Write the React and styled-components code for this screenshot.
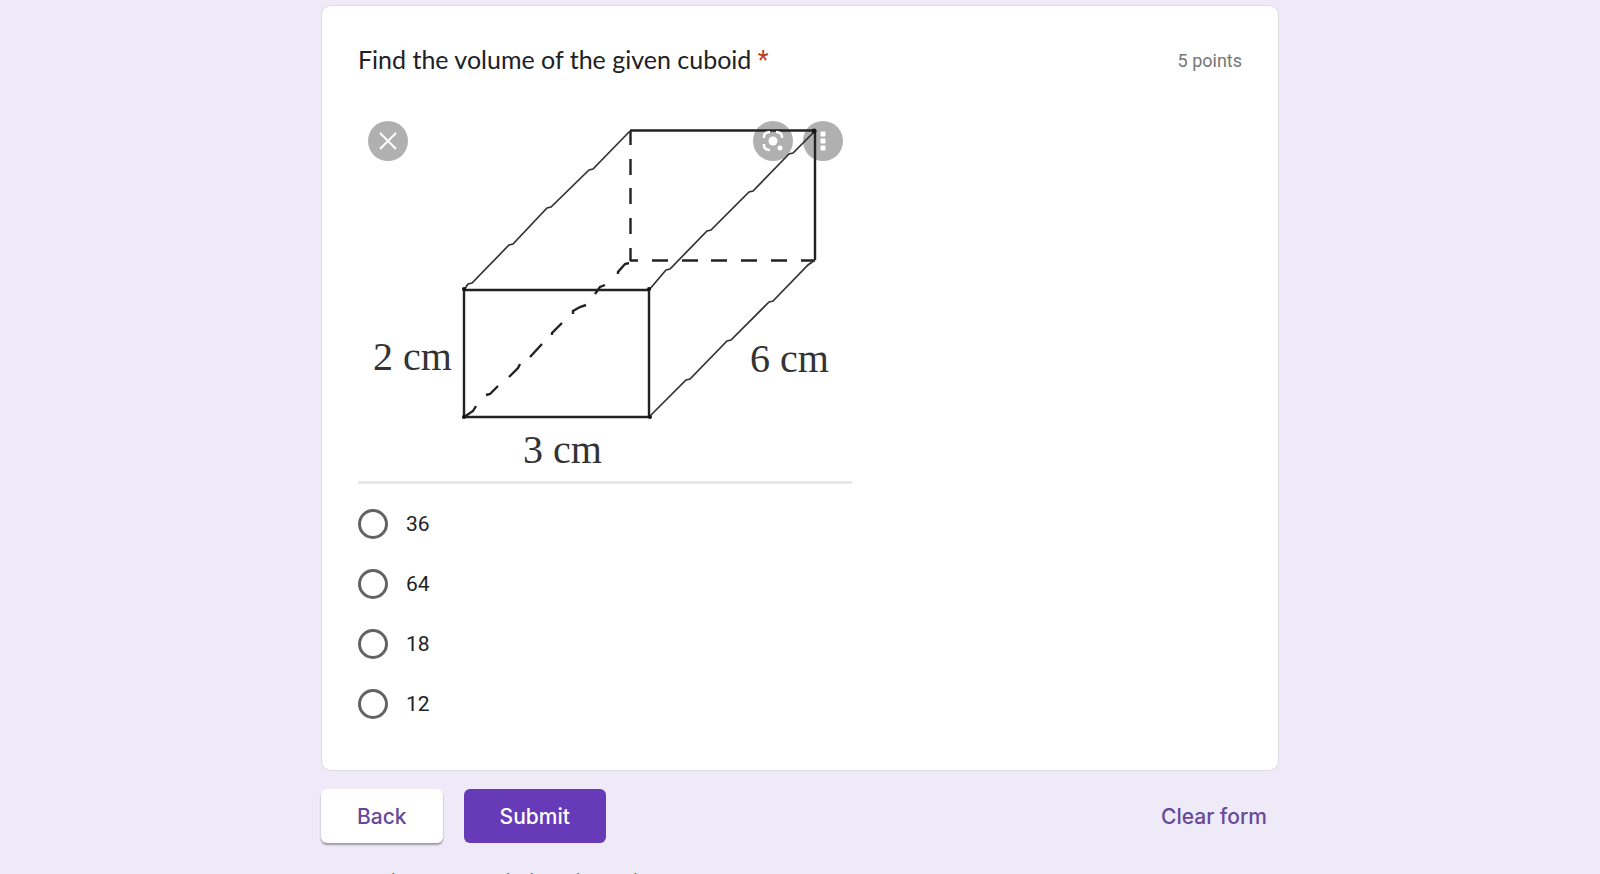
import React, { useState } from "react";
import styled, { createGlobalStyle } from "styled-components";

const GlobalStyle = createGlobalStyle`
  * {
    box-sizing: border-box;
  }

  html {
    scrollbar-width: none;
  }

  body {
    margin: 0;
    background: #eeeaf7;
    color: #202124;
    font-family: Roboto, "Liberation Sans", sans-serif;
  }
`;

const Page = styled.form`
  max-width: 958px;
  margin: 0 auto;
  padding: 5px 0 24px;
`;

const Card = styled.section`
  padding: 36px;
  background: #fff;
  border: 1px solid #dadce0;
  border-radius: 10px;
`;

const CardHeader = styled.header`
  display: flex;
  align-items: flex-start;
  justify-content: space-between;
  margin-bottom: 30px;
`;

const Question = styled.h1`
  margin: 0;
  font-family: Lato, sans-serif;
  font-size: 25px;
  font-weight: 400;
  line-height: 34px;
`;

const Required = styled.span`
  color: #c0391b;
  font-family: Roboto, sans-serif;
`;

const Points = styled.span`
  color: #777;
  font-size: 18px;
  line-height: 38px;
`;

const Figure = styled.figure`
  position: relative;
  max-width: 494px;
  margin: 0 0 10px;
  border-bottom: 3px solid #e8e8e8;
`;

const Drawing = styled.svg`
  display: block;
  width: 100%;
  font-family: "Liberation Serif", serif;
  font-size: 40px;
`;

const Overlay = styled.div`
  position: absolute;
  top: 11px;
  left: 10px;
  right: 9px;
  display: flex;
  justify-content: space-between;
`;

const OverlayGroup = styled.div`
  display: flex;
  gap: 10px;
`;

const RoundButton = styled.button`
  width: 40px;
  height: 40px;
  padding: 0;
  border: 0;
  border-radius: 50%;
  background: rgba(40, 40, 40, 0.37);
  color: #fff;

  svg {
    display: block;
  }
`;

const Options = styled.div`
  display: flex;
  flex-direction: column;
`;

const Option = styled.label`
  display: flex;
  align-items: center;
  gap: 18px;
  height: 60px;
  font-size: 21px;
  line-height: 24px;
`;

const Radio = styled.input`
  appearance: none;
  width: 30px;
  height: 30px;
  margin: 0;
  border: 3px solid #636363;
  border-radius: 50%;

  &:checked {
    border-color: #673ab7;
    background: radial-gradient(#673ab7 50%, transparent 52%);
  }
`;

const Actions = styled.div`
  display: flex;
  align-items: center;
  gap: 21px;
  margin-top: 18px;
`;

const Button = styled.button`
  height: 54px;
  padding: 0 36px;
  border: 0;
  border-radius: 6px;
  background: ${(props) => (props.$primary ? "#673ab7" : "#fff")};
  box-shadow: ${(props) =>
    props.$primary ? "none" : "0 2px 2px rgba(0, 0, 0, 0.35)"};
  color: ${(props) => (props.$primary ? "#fff" : "#66489c")};
  font: 500 21px Inter, sans-serif;
`;

const ClearButton = styled(Button)`
  margin-left: auto;
  padding: 0 12px;
  background: none;
  box-shadow: none;
`;

const Notice = styled.p`
  margin: 26px 0 0;
  color: #666;
  font-size: 18px;
  line-height: 24px;
`;

const options = ["36", "64", "18", "12"];

const Cuboid = () => (
  <Drawing viewBox="0 0 494 371" role="img" aria-label="Cuboid">
    <g fill="none" stroke="#222" strokeWidth="2.4">
      <path d="M106 180H291V307H106Z" />
      <path d="M272 20.5H457V150" />
      {/* hidden edges */}
      <path d="M272.5 21V35M272.5 49V65M272.5 78V94M272.5 108V124M272.5 138V151" />
      <path d="M272 150.5H280M294 150.5H310M324 150.5H340M353 150.5H369M383 150.5H399M413 150.5H429M443 150.5H457" />
      <path d="M106 307L115 301L118 296M128 285L132 284L140 276M151 267L160 258L162 254M172 247L184 234M194 225V223L204 213M215 204V201L222 197L228 195M237 184L242 177L247 175M260 164V162L267 154L271 153" />
    </g>
    <g fill="none" stroke="#333" strokeWidth="1.7">
      <path d="M106 180L110 174L114 173L151 135L155 134L189 98L193 97L231 60L235 59L272 21" />
      <path d="M291 180L308 160L312 159L349 121L353 120L391 82L395 81L431 44L435 43L457 21" />
      <path d="M291 307L328 270L332 269L369 231L373 230L411 192L415 191L450 155L457 150" />
    </g>
    <g fill="#111">
      <circle cx="106" cy="179" r="2" />
      <circle cx="106" cy="307" r="2" />
      <circle cx="292" cy="307" r="2" />
      <circle cx="291" cy="179" r="2" />
      <circle cx="456" cy="21" r="2.5" />
    </g>
    <g fill="#333">
      <text x="15" y="260">2 cm</text>
      <text x="165" y="353">3 cm</text>
      <text x="392" y="262">6 cm</text>
    </g>
  </Drawing>
);

const CloseIcon = () => (
  <svg viewBox="0 0 40 40" stroke="currentColor" strokeWidth="2">
    <path d="M12 12L28 28M28 12L12 28" />
  </svg>
);

const LensIcon = () => (
  <svg viewBox="0 0 40 40" fill="none" stroke="currentColor" strokeWidth="2.5">
    <path d="M11 17V16Q11 11 17 11M23 11Q29 11 29 16V17M11 23V24Q11 29 17 29" />
    <circle cx="20" cy="20" r="4.5" fill="currentColor" stroke="none" />
    <circle cx="27" cy="27" r="2.5" fill="currentColor" stroke="none" />
  </svg>
);

const MoreIcon = () => (
  <svg viewBox="0 0 40 40" fill="currentColor">
    <rect x="17.5" y="10.5" width="5" height="5" rx="1" />
    <rect x="17.5" y="17.5" width="5" height="5" rx="1" />
    <rect x="17.5" y="24.5" width="5" height="5" rx="1" />
  </svg>
);

const App = () => {
  const [answer, setAnswer] = useState("");

  const onSubmit = (event) => {
    event.preventDefault();
  };

  return (
    <>
      <GlobalStyle />
      <Page onSubmit={onSubmit}>
        <Card>
          <CardHeader>
            <Question id="question">
              Find the volume of the given cuboid <Required>*</Required>
            </Question>
            <Points>5 points</Points>
          </CardHeader>
          <Figure>
            <Cuboid />
            <Overlay>
              <RoundButton type="button" aria-label="Close">
                <CloseIcon />
              </RoundButton>
              <OverlayGroup>
                <RoundButton type="button" aria-label="Search image">
                  <LensIcon />
                </RoundButton>
                <RoundButton type="button" aria-label="More">
                  <MoreIcon />
                </RoundButton>
              </OverlayGroup>
            </Overlay>
          </Figure>
          <Options role="radiogroup" aria-labelledby="question">
            {options.map((option) => (
              <Option key={option}>
                <Radio
                  type="radio"
                  name="volume"
                  value={option}
                  checked={answer === option}
                  onChange={() => setAnswer(option)}
                />
                {option}
              </Option>
            ))}
          </Options>
        </Card>
        <Actions>
          <Button type="button">Back</Button>
          <Button type="submit" $primary>
            Submit
          </Button>
          <ClearButton type="button" onClick={() => setAnswer("")}>
            Clear form
          </ClearButton>
        </Actions>
        <Notice>Never submit passwords through Google Forms.</Notice>
      </Page>
    </>
  );
};

export default App;
